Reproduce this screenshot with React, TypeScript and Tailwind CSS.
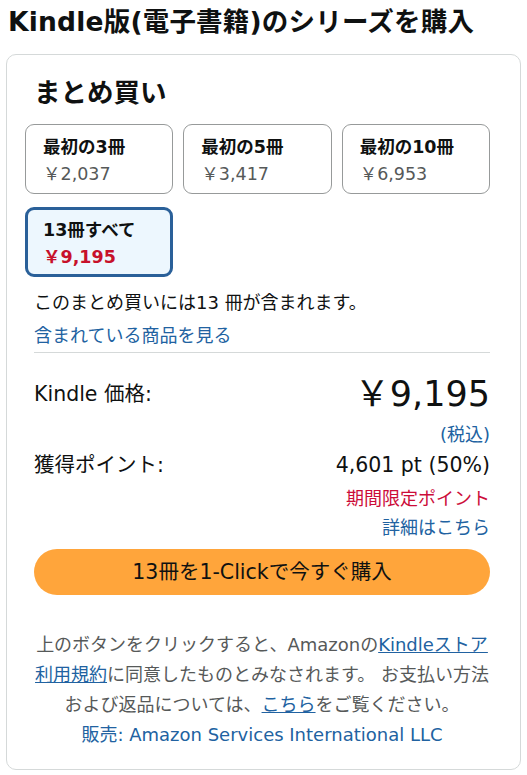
const font = { fontFamily: '"DejaVu Sans", "Noto Sans CJK JP", sans-serif' };

const bundles = [
  { label: '最初の3冊', price: '￥2,037' },
  { label: '最初の5冊', price: '￥3,417' },
  { label: '最初の10冊', price: '￥6,953' },
];

export default function App() {
  return (
    <div className="bg-white text-[#0f1111] pb-[7px]" style={font}>
      <h1 className="px-[8px] pt-[6px] text-[26.5px] font-bold leading-[32px] tracking-[0.2px]">
        Kindle版(電子書籍)のシリーズを購入
      </h1>

      <div className="mx-[6px] mt-[16px] rounded-[10px] border border-[#d5d9d9] pl-[27px] pr-[30px] pt-[20px] pb-[19px]">
        <h2 className="text-[26.5px] font-bold leading-[36px]">まとめ買い</h2>

        <div className="-ml-[9px] mt-[13px] grid w-[465px] grid-cols-3 gap-x-[10px] gap-y-[13px]">
          {bundles.map((b) => (
            <div key={b.label} className="h-[70px] rounded-[9px] border border-[#979a9a] pl-[17px] pt-[10px]">
              <div className="text-[17.5px] font-bold leading-[24px]">{b.label}</div>
              <div className="mt-[2px] text-[17.5px] leading-[26px] text-[#565959]">{b.price}</div>
            </div>
          ))}
          <div className="h-[70px] rounded-[9px] border-[3px] border-[#2a6099] bg-[#edf7fe] pl-[15px] pt-[8px]">
            <div className="text-[17.5px] font-bold leading-[24px]">13冊すべて</div>
            <div className="mt-[2px] text-[17.5px] font-bold leading-[26px] text-[#c7112b]">￥9,195</div>
          </div>
        </div>

        <p className="mt-[12px] text-[18px] leading-[28px]">このまとめ買いには13 冊が含まれます。</p>
        <a className="block mt-[5px] text-[18px] leading-[28px] text-[#2162a1]">含まれている商品を見る</a>

        <div className="mt-[2px] border-t border-[#d5d9d9]" />

        <div className="mt-[19px] flex h-[44px] items-center justify-between">
          <span className="text-[20.5px]">Kindle 価格:</span>
          <span className="text-[35px] leading-[44px]">￥9,195</span>
        </div>
        <div className="mt-[7px] text-right text-[18px] leading-[24px] text-[#2162a1]">(税込)</div>

        <div className="mt-[4px] flex items-center justify-between text-[20.5px] leading-[28px]">
          <span>獲得ポイント:</span>
          <span>4,601 pt (50%)</span>
        </div>
        <div className="mt-[5px] text-right text-[18px] leading-[29px] text-[#cc0c39]">期間限定ポイント</div>
        <div className="text-right text-[18px] leading-[29px] text-[#2162a1]">詳細はこちら</div>

        <button className="mt-[7px] flex h-[46px] w-full items-center justify-center rounded-full bg-[#ffa53b] text-[20.5px] text-[#0f1111]">
          13冊を1-Clickで今すぐ購入
        </button>

        <div className="-mx-[10px] mt-[35px] text-center text-[18px] leading-[30px] text-[#565959]">
          <p>
            上のボタンをクリックすると、Amazonの
            <a className="text-[#2162a1] underline">
              Kindleストア
              <br />
              利用規約
            </a>
            に同意したものとみなされます。 お支払い方法
            <br />
            および返品については、<a className="text-[#2162a1] underline">こちら</a>をご覧ください。
          </p>
          <p className="text-[#2162a1]">販売: Amazon Services International LLC</p>
        </div>
      </div>
    </div>
  );
}
